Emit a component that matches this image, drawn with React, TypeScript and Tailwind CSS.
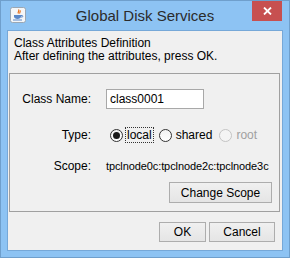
import React from 'react';

const ui = { fontFamily: '"Liberation Sans", Arial, sans-serif' };

function JavaIcon() {
  return (
    <svg width="16" height="16" viewBox="0 0 16 16">
      <rect x="0.5" y="0.5" width="15" height="15" rx="2" fill="#f4f6f8" stroke="#9aa7b4" />
      <path d="M8.5 2.5c1.5 1.5-1.5 2.5 0 4 M10 3.5c1 1-1 2 0 3" stroke="#e8701a" strokeWidth="1.2" fill="none" />
      <path d="M4 8h7v1.5c0 1.5-1.5 2.5-3.5 2.5S4 11 4 9.5z" fill="#5a88c8" />
      <path d="M11 8.5h1.2c0.8 0 0.8 1.5 0 1.5H11" stroke="#5a88c8" fill="none" />
      <path d="M3 13h9" stroke="#5a88c8" />
    </svg>
  );
}

function Radio({ checked, disabled, label, focused }: { checked?: boolean; disabled?: boolean; label: string; focused?: boolean }) {
  return (
    <div className="flex items-center">
      <span
        className={
          'w-[13px] h-[13px] rounded-full border flex items-center justify-center ' +
          (disabled ? 'border-[#c4c4c4] bg-[#f4f4f4]' : 'border-[#333333] bg-gradient-to-b from-[#f2f2f2] to-[#ffffff]')
        }
      >
        {checked && <span className="w-[7px] h-[7px] rounded-full bg-[#1a1a1a]" />}
      </span>
      <span
        className={
          'ml-[3px] leading-[14px] px-[1px] ' +
          (focused ? 'outline outline-1 outline-dotted outline-[#333333] ' : '') +
          (disabled ? 'text-[#a0a0a0]' : 'text-black')
        }
      >
        {label}
      </span>
    </div>
  );
}

function Button({ children, className }: { children: React.ReactNode; className?: string }) {
  return (
    <div
      className={
        'h-[20px] border border-[#adadad] bg-gradient-to-b from-[#f0f0f0] to-[#e5e5e5] flex items-center justify-center text-black ' +
        (className ?? '')
      }
    >
      {children}
    </div>
  );
}

export default function App() {
  return (
    <div className="w-[290px] h-[258px] bg-[#8dc3f3] border border-[#6f9fcc] flex flex-col text-[12px]" style={ui}>
      {/* title bar */}
      <div className="h-[29px] relative flex items-center shrink-0">
        <div className="ml-[9px] mt-[-1px]">
          <JavaIcon />
        </div>
        <div className="absolute inset-x-0 top-[6px] text-center text-[15px] leading-[18px] text-[#2b2b2b]">
          Global Disk Services
        </div>
        <div className="absolute top-0 right-[7px] w-[30px] h-[20px] bg-[#c75050] flex items-center justify-center">
          <svg width="9" height="8" viewBox="0 0 9 8">
            <path d="M1 0.5l7 7M8 0.5l-7 7" stroke="#ffffff" strokeWidth="1.8" />
          </svg>
        </div>
      </div>

      {/* client area */}
      <div className="mx-[6px] h-[221px] border border-[#76a8d8] bg-[#f0f0f0] flex flex-col">
        <div className="pl-[6px] pt-[6px] h-[42px] leading-[13px] text-black">
          <div>Class Attributes Definition</div>
          <div>After defining the attributes, press OK.</div>
        </div>

        {/* form panel */}
        <div className="ml-[1px] mr-[2px] h-[139px] border border-[#a0a0a0] flex flex-col text-black">
          <div className="mt-[15px] h-[20px] flex items-center">
            <div className="w-[81px] text-right">Class Name:</div>
            <div className="ml-[15px] w-[98px] h-[20px] border border-[#a8a8a8] bg-white flex items-center pl-[3px]">
              class0001
            </div>
          </div>
          <div className="mt-[16px] h-[20px] flex items-center">
            <div className="w-[81px] text-right">Type:</div>
            <div className="ml-[19px] flex items-center gap-[6px]">
              <Radio checked focused label="local" />
              <Radio label="shared" />
              <Radio disabled label="root" />
            </div>
          </div>
          <div className="mt-[11px] h-[20px] flex items-center">
            <div className="w-[81px] text-right">Scope:</div>
            <div className="ml-[15px] w-[168px] whitespace-nowrap text-[11px] tracking-[-0.1px]">
              tpclnode0c:tpclnode2c:tpclnode3c
            </div>
          </div>
          <div className="mt-[6px] flex justify-end pr-[7px]">
            <Button className="w-[103px] h-[21px]">Change Scope</Button>
          </div>
        </div>

        <div className="mt-[10px] flex justify-end gap-[3px] pr-[7px]">
          <Button className="w-[47px]">OK</Button>
          <Button className="w-[66px]">Cancel</Button>
        </div>
      </div>
    </div>
  );
}
